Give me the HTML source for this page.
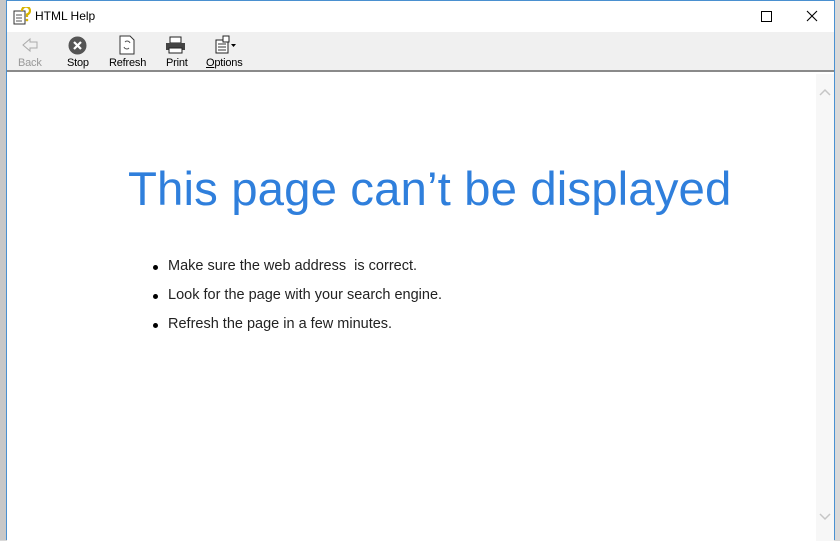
<!DOCTYPE html>
<html><head><meta charset="utf-8"><style>
*{margin:0;padding:0;box-sizing:border-box}
body{width:840px;height:540px;overflow:hidden;background:#d9d9d9;font-family:"Liberation Sans",sans-serif;position:relative}
.lstrip{position:absolute;left:0;top:0;width:6px;height:540px;background:#c8c8c8}
.win{position:absolute;left:6px;top:0;width:829px;height:540px;background:#fff;border-left:1px solid #4a90d0;border-right:1px solid #4a90d0;border-top:1px solid #4a90d0}
.title{position:absolute;left:0;top:0;width:100%;height:31px;background:#fff}
.title .t{position:absolute;left:28px;top:8px;font-size:12px;color:#000}
.tb{position:absolute;left:0;top:31px;width:100%;height:40px;background:#f0f0f0;border-bottom:2px solid #8a8a8a}
.btn{position:absolute;top:25px;font-size:11px;color:#000;text-align:center;letter-spacing:-0.2px}
.content{position:absolute;left:0;top:73px;width:100%;height:467px;background:#fff}
.sb{position:absolute;right:0;top:73px;width:18px;height:467px;background:#f7f7f7}
h1{position:absolute;left:121px;top:161px;font-weight:300;font-size:47.4px;color:#2f7fdc;white-space:nowrap;letter-spacing:0.1px}
ul{position:absolute;left:146px;top:257px;list-style:none;font-size:14.5px;color:#222}
li{height:29px;position:relative;padding-left:15px}
li:before{content:"";position:absolute;left:0;top:7px;width:5px;height:5px;border-radius:50%;background:#000}
</style></head><body>
<div class="lstrip"></div>
<div class="win">
 <div class="title">
  <svg style="position:absolute;left:6px;top:6px" width="18" height="18" viewBox="0 0 18 18"><rect x="1" y="4" width="11" height="13" fill="#fff" stroke="#333"/><path d="M3 8h6M3 11h6M3 14h6" stroke="#555"/><path d="M9 4a4 4 0 1 1 5 3.5v2.5" fill="none" stroke="#d8b400" stroke-width="2.2"/><circle cx="14" cy="13" r="1.3" fill="#d8b400"/></svg>
  <div class="t">HTML Help</div>
  <svg style="position:absolute;left:754px;top:10px" width="11" height="11"><rect x="0.5" y="0.5" width="10" height="10" fill="none" stroke="#000"/></svg>
  <svg style="position:absolute;left:799px;top:9px" width="12" height="12"><path d="M1 1L11 11M11 1L1 11" stroke="#000" stroke-width="1.1"/></svg>
 </div>
 <div class="tb">
  <svg style="position:absolute;left:14px;top:5px" width="18" height="16"><path d="M2 8L9 2V5H16V11H9V14Z" fill="none" stroke="#aaa"/></svg>
  <div class="btn" style="left:11px;color:#999">Back</div>
  <svg style="position:absolute;left:61px;top:4px" width="19" height="19"><circle cx="9.5" cy="9.5" r="9" fill="#555"/><path d="M6 6L13 13M13 6L6 13" stroke="#fff" stroke-width="2.2"/></svg>
  <div class="btn" style="left:60px">Stop</div>
  <svg style="position:absolute;left:112px;top:3px" width="16" height="20"><path d="M1 1H11L15 5V19H1Z" fill="#fff" stroke="#333"/><path d="M6 7a3 3 0 0 1 5 1M10 13a3 3 0 0 1-5-1" fill="none" stroke="#555"/></svg>
  <div class="btn" style="left:102px">Refresh</div>
  <svg style="position:absolute;left:158px;top:4px" width="21" height="18"><rect x="5" y="1" width="11" height="6" fill="#fff" stroke="#222"/><rect x="1" y="7" width="19" height="7" fill="#444"/><rect x="4" y="12" width="13" height="5" fill="#fff" stroke="#222"/></svg>
  <div class="btn" style="left:159px">Print</div>
  <svg style="position:absolute;left:208px;top:3px" width="22" height="19"><rect x="1" y="5" width="12" height="13" fill="#fff" stroke="#222"/><path d="M3 9h8M3 12h8M3 15h8" stroke="#333"/><rect x="8" y="1" width="6" height="6" fill="#fff" stroke="#222"/><path d="M16 9h5l-2.5 3z" fill="#000"/></svg>
  <div class="btn" style="left:199px"><u>O</u>ptions</div>
 </div>
 <div class="content"></div>
 <div class="sb">
  <svg style="position:absolute;left:3px;top:14px" width="12" height="8"><path d="M1 7L6 2L11 7" fill="none" stroke="#c6c6c6" stroke-width="1.5"/></svg>
  <svg style="position:absolute;left:3px;top:439px" width="12" height="8"><path d="M1 1L6 6L11 1" fill="none" stroke="#c6c6c6" stroke-width="1.5"/></svg>
 </div>
 <h1>This page can’t be displayed</h1>
 <ul>
  <li>Make sure the web address&nbsp; is correct.</li>
  <li>Look for the page with your search engine.</li>
  <li>Refresh the page in a few minutes.</li>
 </ul>
</div>
</body></html>
